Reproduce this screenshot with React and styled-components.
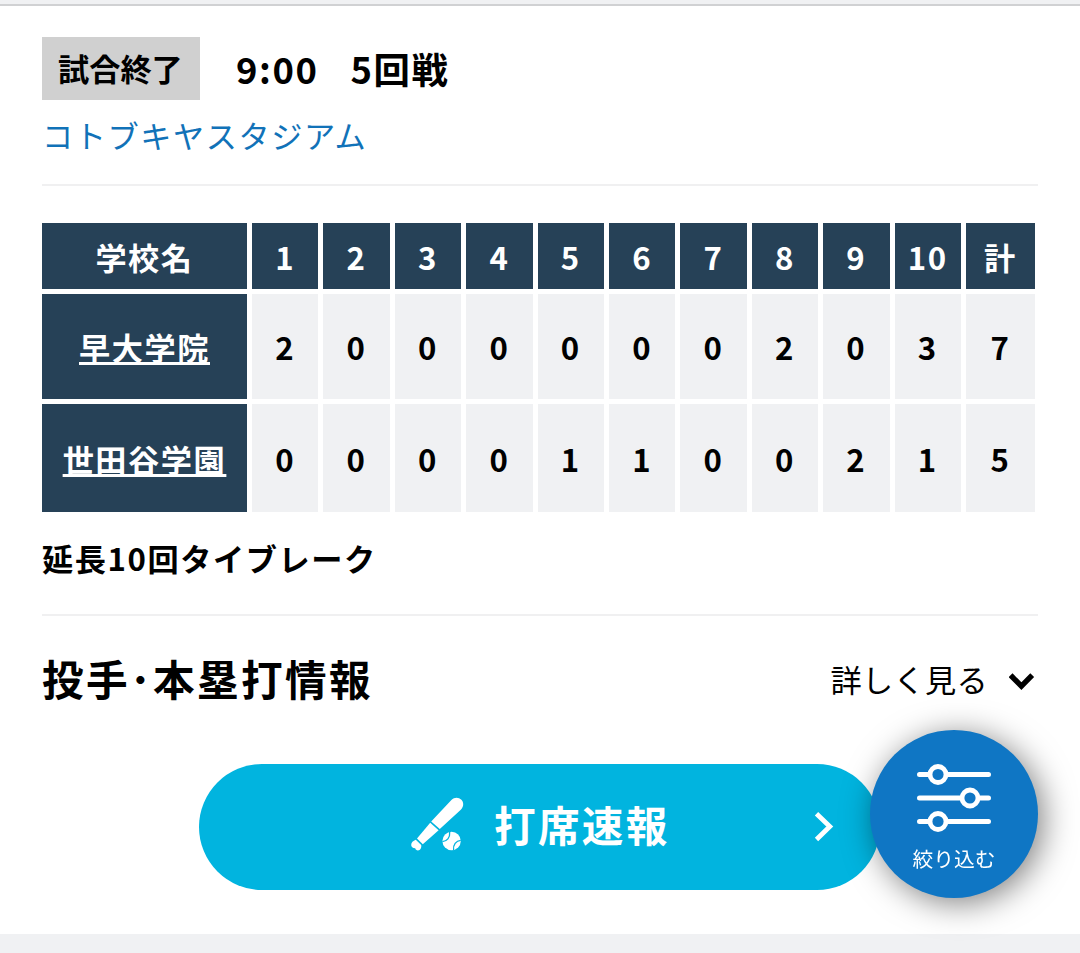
import React from 'react';

import styled, { createGlobalStyle } from 'styled-components';

const GlobalStyle = createGlobalStyle`
  * {
    box-sizing: border-box;
  }

  body {
    margin: 0;
    background: #f0f1f3;
    color: #000;
    font-family: 'Noto Sans CJK JP', sans-serif;
    font-size: 31.2px;
    letter-spacing: 0.05em;
  }
`;

const Page = styled.div`
  height: 953px;
  padding-top: 4px;
  overflow: hidden;
`;

const Card = styled.section`
  height: 930px;
  padding: 31px 42px 0;
  border-top: 2px solid #d0d1d3;
  background: #fff;
`;

const GameHeader = styled.header`
  height: 149px;
  border-bottom: 2px solid #f0f0f1;
`;

const GameStatus = styled.div`
  display: flex;
  align-items: center;
  height: 63px;
`;

const StatusBadge = styled.span`
  width: 158px;
  height: 63px;
  padding-left: 16px;
  background: #d0d0d0;
  font-size: 31.2px;
  font-weight: 700;
  letter-spacing: 0;
  line-height: 61px;
`;

const StatusText = styled.span`
  margin-left: ${props => props.$gap}px;
  font-size: 36.4px;
  font-weight: 700;
  line-height: 63px;
`;

const StadiumLink = styled.a`
  display: block;
  margin-top: 12px;
  color: #1172b8;
  line-height: 46px;
`;

const ScoreBoard = styled.div`
  display: grid;
  grid-template-columns: 205px repeat(10, 66.4px) 69px;
  grid-template-rows: 66px 105px 108px;
  gap: 5px;
  margin-top: 37px;
  font-weight: 700;
`;

const HeadCell = styled.div`
  display: flex;
  align-items: center;
  justify-content: center;
  background: #264157;
  color: #fff;
`;

const TeamLink = styled.a`
  text-decoration: underline;
  text-decoration-skip-ink: none;
  text-decoration-thickness: 3px;
`;

const ScoreCell = styled.div`
  display: flex;
  align-items: center;
  justify-content: center;
  background: #f0f1f3;
`;

const Note = styled.p`
  height: 104px;
  margin: 0;
  padding-top: 23px;
  border-bottom: 2px solid #f0f0f1;
  font-weight: 700;
  line-height: 46px;
`;

const PitcherInfo = styled.div`
  display: flex;
  align-items: center;
  justify-content: space-between;
  height: 132px;
`;

const InfoTitle = styled.h2`
  margin: 0;
  padding-bottom: 8px;
  font-size: 41.6px;
  font-weight: 700;
  letter-spacing: 0.057em;
`;

const MoreButton = styled.div`
  display: flex;
  align-items: center;
  gap: 21px;
  padding-right: 3px;
`;

const MoreLabel = styled.span`
  padding-bottom: 8px;
  letter-spacing: 0.01em;
`;

const LiveButton = styled.a`
  display: flex;
  align-items: center;
  width: 681px;
  height: 126px;
  margin: 16px 0 0 157px;
  padding: 0 46px 0 211px;
  border-radius: 63px;
  background: #01b4df;
  color: #fff;
  font-size: 41.6px;
  font-weight: 700;
`;

const LiveLabel = styled.span`
  flex: 1;
  margin-left: 30px;
  padding-bottom: 7px;
  letter-spacing: 0.055em;
`;

const FilterButton = styled.div`
  position: fixed;
  top: 730px;
  left: 870px;
  display: flex;
  flex-direction: column;
  align-items: center;
  width: 168px;
  height: 168px;
  padding-top: 34px;
  border-radius: 50%;
  background: #0f76c4;
  box-shadow: 5px 5px 32px rgba(0, 0, 0, 0.5);
  color: #fff;
  font-size: 20.8px;
  line-height: 30px;
`;

const FilterLabel = styled.span`
  margin-top: 9px;
  letter-spacing: 0;
`;

const innings = ['1', '2', '3', '4', '5', '6', '7', '8', '9', '10', '計'];

const teams = [
  { name: '早大学院', scores: [2, 0, 0, 0, 0, 0, 0, 2, 0, 3, 7] },
  { name: '世田谷学園', scores: [0, 0, 0, 0, 1, 1, 0, 0, 2, 1, 5] }
];

const ChevronDown = () => (
  <svg width="26" height="18" viewBox="0 0 26 18" fill="none">
    <path d="M1.6 2.2 12.4 13.2 23.2 2.2" stroke="#000" strokeWidth="5.4" />
  </svg>
);

const ChevronRight = () => (
  <svg width="20" height="30" viewBox="0 0 20 30" fill="none">
    <path d="M2.5 1.8 15.8 14.6 2.5 27.4" stroke="#fff" strokeWidth="4.8" />
  </svg>
);

const BatIcon = () => (
  <svg width="54" height="60" viewBox="0 0 54 60" fill="#fff">
    <path d="M21.2 24.6 41.4 3C44.6-.2 48.800.2 51.400 2.800s2.400 6.800-.6 10L29.800 32z" />
    <path d="M20.200 25.800 28.600 33.200 12.800 47.200 7 41.600z" />
    <path d="M5.800 42.800 11.200 48c.6 2.800-1 5.400-3.200 5.400-1.600 0-2.400-.8-2.800-2.200-2.600-.2-4-1.200-4-3.200 0-2.400 1.800-4.200 4.600-5.200z" />
    <circle cx="41.6" cy="44" r="9.2" />
    <g fill="none" stroke="#01b4df" strokeWidth="1.3">
      <path d="M32.400 44.600c4.500-.2 7.800-3.800 7.300-9.600" />
      <path d="M43.600 53.200c-.8-5.500 2.500-9.400 7.200-9.800" />
    </g>
  </svg>
);

const FilterIcon = () => (
  <svg width="76" height="70" viewBox="0 0 76 70" fill="none" stroke="#fff">
    <g strokeWidth="5" strokeLinecap="round">
      <path d="M3.5 10.5h69M3.5 34h69M3.5 57.5h69" />
    </g>
    <g fill="#0f76c4" strokeWidth="4.8">
      <circle cx="22" cy="10.5" r="8" />
      <circle cx="54" cy="34" r="8" />
      <circle cx="22" cy="57.5" r="8" />
    </g>
  </svg>
);

const App = () => (
  <Page>
    <GlobalStyle />
    <Card>
      <GameHeader>
        <GameStatus>
          <StatusBadge>試合終了</StatusBadge>
          <StatusText $gap={36}>9:00</StatusText>
          <StatusText $gap={32}>5回戦</StatusText>
        </GameStatus>
        <StadiumLink>コトブキヤスタジアム</StadiumLink>
      </GameHeader>
      <ScoreBoard>
        <HeadCell>学校名</HeadCell>
        {innings.map(inning => (
          <HeadCell key={inning}>{inning}</HeadCell>
        ))}
        {teams.map(team => (
          <React.Fragment key={team.name}>
            <HeadCell>
              <TeamLink>{team.name}</TeamLink>
            </HeadCell>
            {team.scores.map((score, index) => (
              <ScoreCell key={index}>{score}</ScoreCell>
            ))}
          </React.Fragment>
        ))}
      </ScoreBoard>
      <Note>延長10回タイブレーク</Note>
      <PitcherInfo>
        <InfoTitle>投手･本塁打情報</InfoTitle>
        <MoreButton>
          <MoreLabel>詳しく見る</MoreLabel>
          <ChevronDown />
        </MoreButton>
      </PitcherInfo>
      <LiveButton>
        <BatIcon />
        <LiveLabel>打席速報</LiveLabel>
        <ChevronRight />
      </LiveButton>
    </Card>
    <FilterButton>
      <FilterIcon />
      <FilterLabel>絞り込む</FilterLabel>
    </FilterButton>
  </Page>
);

export default App;
